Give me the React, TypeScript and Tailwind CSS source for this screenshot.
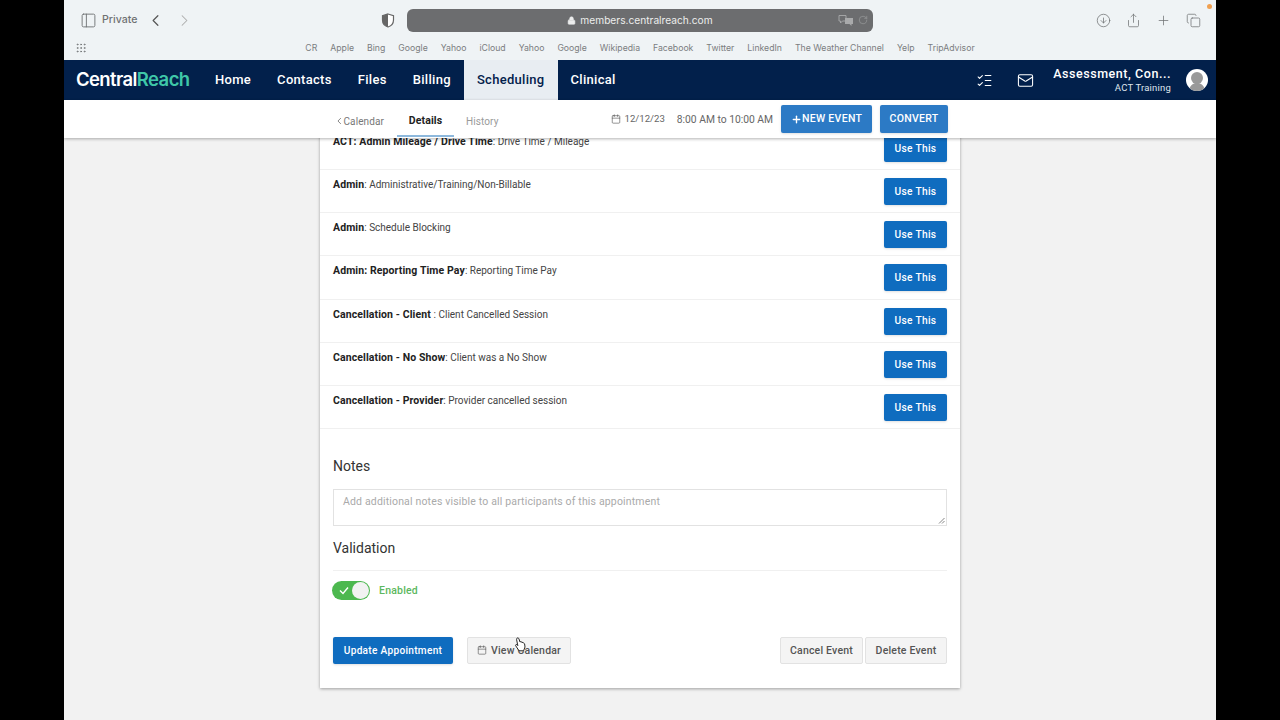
import React from "react";
import {
  Calendar,
  ChevronLeft,
  ChevronRight,
  CircleArrowDown,
  Copy,
  Grip,
  ListChecks,
  Lock,
  Mail,
  PanelLeft,
  Plus,
  RotateCw,
  Share,
} from "lucide-react";

const bookmarks = [
  "CR",
  "Apple",
  "Bing",
  "Google",
  "Yahoo",
  "iCloud",
  "Yahoo",
  "Google",
  "Wikipedia",
  "Facebook",
  "Twitter",
  "LinkedIn",
  "The Weather Channel",
  "Yelp",
  "TripAdvisor",
];

const navItems = ["Home", "Contacts", "Files", "Billing", "Scheduling", "Clinical"];

const eventTypes = [
  { name: "ACT: Admin Mileage / Drive Time", desc: ": Drive Time / Mileage" },
  { name: "Admin", desc: ": Administrative/Training/Non-Billable" },
  { name: "Admin", desc: ": Schedule Blocking" },
  { name: "Admin: Reporting Time Pay", desc: ": Reporting Time Pay" },
  { name: "Cancellation - Client ", desc: ": Client Cancelled Session" },
  { name: "Cancellation - No Show", desc: ": Client was a No Show" },
  { name: "Cancellation - Provider", desc: ": Provider cancelled session" },
];

function BrowserBar() {
  return (
    <div className="h-[60px] bg-[#eff3f5] relative font-['Inter',sans-serif] text-[#6f7173]">
      <div className="h-[40px] flex items-center">
        <div className="w-[317px] pl-[16px] flex items-center">
          <PanelLeft size={17} strokeWidth={1.3} />
          <span className="ml-[5px] text-[10.6px] font-medium">Private</span>
          <ChevronLeft size={19} strokeWidth={1.5} className="ml-[9px] text-[#555]" />
          <ChevronRight size={19} strokeWidth={1.3} className="ml-[10px] text-[#aaa]" />
        </div>
        <svg width="14" height="15" viewBox="0 0 14 15">
          <path d="M7 1 L12.5 2.8 V7 C12.5 10.5 10 13 7 14 C4 13 1.5 10.5 1.5 7 V2.8 Z" fill="#fff" stroke="#666" strokeWidth="1.2" />
          <path d="M7 1 L1.5 2.8 V7 C1.5 10.5 4 13 7 14 Z" fill="#666" />
        </svg>
        <div className="ml-[12px] w-[466px] h-[23px] rounded-[6px] bg-[#6c6d6f] flex items-center relative text-[#eceded]">
          <div className="flex-1 flex items-center justify-center gap-[4px] pt-[1px]">
            <Lock size={9} fill="currentColor" strokeWidth={1.5} />
            <span className="text-[10.2px]">members.centralreach.com</span>
          </div>
          <svg className="absolute right-[19px] top-[5px]" width="16" height="13" viewBox="0 0 16 13">
            <path d="M1 1.5 H8 V7 H4.5 L2.5 9 V7 H1 Z" fill="none" stroke="#a9aaab" strokeWidth="0.9" />
            <path d="M7 4 H15 V10 H13.5 V12 L11.5 10 H7 Z" fill="#a9aaab" />
          </svg>
          <RotateCw size={10} strokeWidth={1.2} className="absolute right-[5px] text-[#a9aaab]" />
        </div>
        <div className="flex-1 flex items-center justify-end pr-[15px] gap-[15px]">
          <CircleArrowDown size={15} strokeWidth={1.2} />
          <Share size={15} strokeWidth={1.2} />
          <Plus size={15} strokeWidth={1.2} />
          <Copy size={15} strokeWidth={1.2} />
        </div>
      </div>
      <div className="absolute right-[4px] top-[4px] w-[5px] h-[5px] rounded-full bg-[#f0a050]" />
      <div className="h-[20px] flex items-start relative">
        <Grip size={12} strokeWidth={1.5} className="absolute left-[11px] top-[2px]" />
        <div className="w-full flex justify-center gap-[13px] text-[8.7px] leading-[16px] text-[#7b7d7f]">
          {bookmarks.map((b, i) => (
            <span key={i}>{b}</span>
          ))}
        </div>
      </div>
    </div>
  );
}

function TopNav() {
  return (
    <div className="h-[40px] bg-[#02204b] flex items-center font-['Roboto',sans-serif]">
      <div className="w-[138px] pl-[12px] text-[18.5px] font-semibold tracking-[-0.6px] font-['Inter',sans-serif] text-white">
        Central<span className="text-[#3fc7a8]">Reach</span>
      </div>
      {navItems.map((item) => (
        <div
          key={item}
          className={
            item === "Scheduling"
              ? "h-full px-[13px] flex items-center text-[13px] font-medium tracking-[0.3px] bg-[#e8edf2] text-[#02204b]"
              : "h-full px-[13px] flex items-center text-[13px] font-medium tracking-[0.3px] text-white"
          }
        >
          {item}
        </div>
      ))}
      <div className="flex-1 flex items-center justify-end pr-[8px] text-white">
        <ListChecks size={17} strokeWidth={1.5} />
        <Mail size={17} strokeWidth={1.5} className="ml-[24px]" />
        <div className="ml-[19px] flex flex-col items-end leading-none">
          <span className="text-[12.5px] font-medium tracking-[0.55px]">Assessment, Con...</span>
          <span className="text-[9.5px] mt-[2px] tracking-[0.2px] text-[#dfe5ec]">ACT Training</span>
        </div>
        <div className="ml-[15px] w-[22px] h-[22px] rounded-full bg-white overflow-hidden">
          <svg viewBox="0 0 22 22" width="22" height="22">
            <circle cx="11" cy="9" r="6" fill="#999" />
            <path d="M3 22 C4 15 8 14 11 14 C14 14 18 15 19 22 Z" fill="#999" />
          </svg>
        </div>
      </div>
    </div>
  );
}

function SubBar() {
  return (
    <div className="h-[38px] bg-white flex items-center relative z-10 shadow-[0_1px_3px_rgba(0,0,0,0.3)] font-['Roboto',sans-serif] text-[10px]">
      <div className="ml-[270px] w-[50px] pt-[4px] flex items-center text-[#777] tracking-[0.1px]">
        <ChevronLeft size={12} strokeWidth={2} className="-mr-[1px]" />
        <span>Calendar</span>
      </div>
      <div className="ml-[13px] w-[57px] h-full pt-[4px] flex items-center justify-center relative text-[10.5px] font-bold text-[#222] tracking-[0.1px]">
        Details
        <div className="absolute left-0 right-0 bottom-[1px] h-[2px] bg-[#8db8dc]" />
      </div>
      <span className="ml-[12px] pt-[4px] text-[#9a9a9a] tracking-[0.1px]">History</span>
      <Calendar size={10} strokeWidth={1.5} className="ml-[112px] text-[#555]" />
      <span className="ml-[4px] pt-[1px] text-[9.6px] text-[#666]">12/12/23</span>
      <span className="ml-[12px] pt-[1px] text-[10.3px] text-[#666]">8:00 AM to 10:00 AM</span>
      <div className="ml-[8px] w-[91px] h-[28px] rounded-[2px] bg-[#2c7ac5] flex items-center justify-center text-white font-medium text-[10.5px] tracking-[0.3px] shadow-sm">
        <Plus size={11} strokeWidth={3} />
        NEW EVENT
      </div>
      <div className="ml-[8px] w-[68px] h-[28px] rounded-[2px] bg-[#2c7ac5] flex items-center justify-center text-white font-medium text-[10.5px] tracking-[0.3px] shadow-sm">
        CONVERT
      </div>
    </div>
  );
}

function EventRow({ name, desc }: { name: string; desc: string }) {
  return (
    <div className="h-[43.15px] px-[13px] pt-[8px] flex items-start justify-between border-b border-[#f0f0f0]">
      <p className="text-[10px] leading-[14px] text-[#444]">
        <span className="text-[10.5px] tracking-[0.1px] font-bold text-[#222]">{name}</span>
        {desc}
      </p>
      <button className="w-[63px] h-[27px] rounded-[2px] bg-[#0f6cbf] text-white text-[10.2px] font-medium tracking-[0.3px] shadow-sm">
        Use This
      </button>
    </div>
  );
}

function GreyButton({ children, className }: { children: React.ReactNode; className: string }) {
  return (
    <button
      className={
        "h-[27px] flex items-center justify-center rounded-[2px] border border-[#e2e2e2] bg-[#f4f4f4] text-[10.5px] font-medium text-[#555] tracking-[0.2px] " +
        className
      }
    >
      {children}
    </button>
  );
}

function EventCard() {
  return (
    <div className="w-[640px] -mt-[11px] mb-[32px] bg-white shadow-[0_1px_3px_rgba(0,0,0,0.35)]">
      {eventTypes.map((row) => (
        <EventRow key={row.name + row.desc} name={row.name} desc={row.desc} />
      ))}
      <div className="px-[13px]">
        <h3 className="mt-[28px] text-[14px] leading-[18px] text-[#333]">Notes</h3>
        <div className="mt-[14px] h-[37px] border border-[#e2e2e2] px-[9px] pt-[5px] text-[10.5px] leading-[14px] text-[#aaa] tracking-[0.16px] relative">
          Add additional notes visible to all participants of this appointment
          <svg className="absolute right-[1px] bottom-[1px]" width="7" height="7" viewBox="0 0 7 7">
            <path d="M1 6.5 L6.5 1 M4 6.5 L6.5 4" stroke="#666" strokeWidth="0.8" />
          </svg>
        </div>
        <h3 className="mt-[13px] text-[14px] leading-[18px] text-[#333]">Validation</h3>
        <div className="mt-[13px] border-t border-[#f0f0f0]" />
        <div className="mt-[10px] flex items-center">
          <div className="w-[38px] h-[19px] -ml-[1px] rounded-full bg-[#4cb84f] flex items-center justify-end pr-[1px] relative">
            <svg className="absolute left-[7px] top-[5px]" width="10" height="9" viewBox="0 0 10 9">
              <path d="M1 4.5 L4 7.5 L9 1.5" fill="none" stroke="#fff" strokeWidth="1.4" />
            </svg>
            <div className="w-[17px] h-[17px] rounded-full bg-[#f2f2f2]" />
          </div>
          <span className="ml-[9px] text-[10.5px] font-medium text-[#5cb860] tracking-[0.2px]">Enabled</span>
        </div>
        <div className="mt-[37px] pb-[24px] flex items-center">
          <button className="w-[120px] h-[27px] rounded-[2px] bg-[#0f6cbf] text-white text-[10.1px] font-medium tracking-[0.3px] shadow-sm">
            Update Appointment
          </button>
          <GreyButton className="ml-[14px] w-[104px] gap-[4px]">
            <Calendar size={10} strokeWidth={1.5} />
            View Calendar
          </GreyButton>
          <GreyButton className="ml-auto w-[83px]">Cancel Event</GreyButton>
          <GreyButton className="ml-[2px] w-[82px]">Delete Event</GreyButton>
        </div>
      </div>
    </div>
  );
}

export default function App() {
  return (
    <div className="h-[720px] bg-black flex justify-center overflow-hidden relative">
      <div className="w-[1152px] h-full flex flex-col">
        <BrowserBar />
        <TopNav />
        <SubBar />
        <div className="flex-1 bg-[#f2f2f2] flex flex-col items-center overflow-hidden font-['Roboto',sans-serif]">
          <EventCard />
        </div>
      </div>
      <svg className="absolute left-[514px] top-[637px]" width="12" height="15" viewBox="0 0 12 15">
        <path
          d="M3 1.2 C3.8 0.6 4.6 1 4.9 1.8 L6 5 L6.6 4.7 L8 5.2 L9.4 5.8 L10.6 6.8 L11 10 L9.6 13.8 L5 13.8 L1.6 8.6 C1.3 7.8 2.2 7.2 3 7.8 L3.8 8.6 L2.6 2.6 C2.5 2 2.6 1.5 3 1.2 Z"
          fill="#fff"
          stroke="#111"
          strokeWidth="0.9"
        />
      </svg>
    </div>
  );
}
